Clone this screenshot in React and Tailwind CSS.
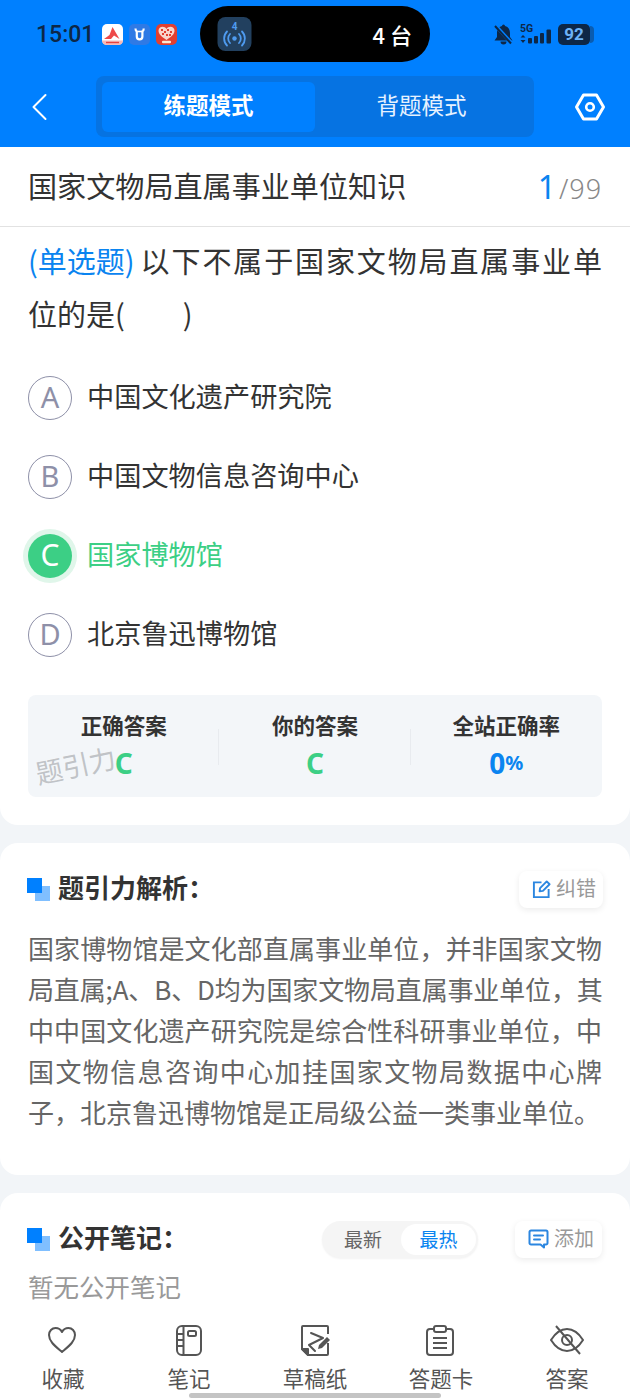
const FONT = 'font-["Noto_Sans_CJK_SC","Noto_Sans",sans-serif]';

const analysisLines = [
  '国家博物馆是文化部直属事业单位，并非国家文物',
  '局直属;A、B、D均为国家文物局直属事业单位，其',
  '中中国文化遗产研究院是综合性科研事业单位，中',
  '国文物信息咨询中心加挂国家文物局数据中心牌',
];

const options = [
  { key: 'A', text: '中国文化遗产研究院' },
  { key: 'B', text: '中国文物信息咨询中心' },
  { key: 'C', text: '国家博物馆', active: true },
  { key: 'D', text: '北京鲁迅博物馆' },
];

const AppIcons = () => (
  <div className="flex items-center gap-[6px]">
    <svg width="21" height="21" viewBox="0 0 21 21">
      <rect width="21" height="21" rx="5" fill="#fff" />
      <path d="M2 15 L7.5 11 L10.5 3 L17.5 15 L12 11.5 L9 15 Z" fill="#ee4a4a" />
      <path d="M0 16.5h21a4.5 4.5 0 0 1-4.5 4.5h-12A4.5 4.5 0 0 1 0 16.5z" fill="#f7b9b7" />
      <rect x="4" y="17.8" width="13" height="1.4" fill="#e8423f" />
    </svg>
    <svg width="21" height="21" viewBox="0 0 21 21">
      <rect width="21" height="21" rx="5" fill="#2f7ae5" />
      <path d="M6.5 4.5 C6.5 6.5 7 7.2 7.8 7.5 V12.5 a2.8 2.8 0 0 0 5.6 0 V7.5 C14.2 7.2 14.7 6.5 14.7 4.5" fill="none" stroke="#fff" strokeWidth="2.2" />
      <path d="M8.5 7.5h4.5" stroke="#fff" strokeWidth="1.6" />
    </svg>
    <svg width="21" height="21" viewBox="0 0 21 21">
      <rect width="21" height="21" rx="5" fill="#e23f30" />
      <path d="M10.5 16 C6 13 2.5 10.5 2.5 6.8 C2.5 4.2 4.5 2.8 6.5 2.8 C8.2 2.8 9.8 3.6 10.5 5 C11.2 3.6 12.8 2.8 14.5 2.8 C16.5 2.8 18.5 4.2 18.5 6.8 C18.5 10.5 15 13 10.5 16 Z" fill="#f9d6cc" />
      <path d="M5 5h2v2H5zM8 7h2v2H8zM11 5h2v2h-2zM14 7h2v2h-2zM6 9h2v2H6zM10 10h2v2h-2zM13 10h2v2h-2z" fill="#e23f30" />
      <rect x="6" y="16.8" width="9" height="2.4" rx="1" fill="#fbe9d2" />
    </svg>
  </div>
);

const StatusBar = () => (
  <div className="h-[68px] shrink-0 pl-[36px] pr-[36px] pt-[6px] flex items-start">
    <div className="w-[164px] h-[56px] flex items-center">
      <span className="w-[66px] text-[23px] text-[#0d2747] font-medium font-['Roboto',sans-serif] leading-none">15:01</span>
      <AppIcons />
    </div>
    <div className="w-[230px] h-[56px] bg-black rounded-[28px] flex items-center justify-between pl-[17px] pr-[18px]">
      <svg width="35" height="34" viewBox="0 0 34 34">
        <rect width="34" height="34" rx="8" fill="#22405f" />
        <text x="17" y="13" fontSize="10" fontWeight="700" fill="#4f9bf0" textAnchor="middle" fontFamily="Roboto, sans-serif">4</text>
        <circle cx="17" cy="21.5" r="2.2" fill="#4f9bf0" />
        <path d="M12.5 17 a6.5 6.5 0 0 0 0 9 M21.5 17 a6.5 6.5 0 0 1 0 9 M9.5 14.5 a10 10 0 0 0 0 14 M24.5 14.5 a10 10 0 0 1 0 14" fill="none" stroke="#4f9bf0" strokeWidth="1.8" strokeLinecap="round" />
      </svg>
      <span className={`text-[22px] text-white font-medium leading-none ${FONT}`}>4 台</span>
    </div>
    <div className="flex-1 h-[56px] flex items-center justify-end">
      <svg width="19" height="21" viewBox="0 0 19 21">
        <path d="M9.5 0.5 a1.5 1.5 0 0 1 1.5 1.5 C14.8 3 16 6 16 9.5 V13 L18.5 16.5 H0.5 L3 13 V9.5 C3 6 4.2 3 8 2 A1.5 1.5 0 0 1 9.5 0.5Z" fill="#0d2747" />
        <path d="M6.5 17.5 a3 3 0 0 0 6 0z" fill="#0d2747" />
        <path d="M1 1 L17.5 19" stroke="#0080ff" strokeWidth="3.6" />
        <path d="M1 2 L17 19.5" stroke="#0d2747" strokeWidth="2" />
      </svg>
      <svg className="ml-[7px]" width="32" height="22" viewBox="0 0 32 22">
        <text x="0" y="8.5" fontSize="10.5" fontWeight="700" fill="#0d2747" fontFamily="Roboto, sans-serif">5G</text>
        <path d="M3 12 L5.5 14.5 H0.5 Z M3 20 L0.5 17 H5.5 Z" fill="#0d2747" />
        <rect x="8" y="15" width="4" height="5.5" rx="1" fill="#0d2747" />
        <rect x="14" y="13" width="4" height="7.5" rx="1" fill="#0d2747" />
        <rect x="20" y="10" width="4" height="10.5" rx="1" fill="#0d2747" />
        <rect x="26.5" y="6.5" width="4.5" height="14" rx="1" fill="#0d2747" />
      </svg>
      <div className="flex items-center ml-[6px]">
        <div className="w-[32px] h-[21px] rounded-[5px] bg-[#0d2747] flex items-center justify-center">
          <span className="text-[17px] font-bold text-[#6db3f8] font-['Roboto',sans-serif] leading-none">92</span>
        </div>
        <div className="w-[4px] h-[17px] rounded-r-[4px] bg-[#0a5cb0]" />
      </div>
    </div>
  </div>
);

const Header = () => (
  <div className="bg-[#0080ff] h-[147px] shrink-0 flex flex-col">
    <StatusBar />
    <div className="flex items-start h-[79px] pt-[8px]">
      <div className="w-[96px] h-[61px] flex items-center pl-[30px]">
        <svg width="18" height="28" viewBox="0 0 18 28" fill="none">
          <path d="M15.5 2 L3.5 14 L15.5 26" stroke="#fff" strokeWidth="2" strokeLinecap="round" strokeLinejoin="round" />
        </svg>
      </div>
      <div className="w-[438px] h-[61px] rounded-[8px] bg-[#0673e2] p-[6px] flex">
        <div className={`w-[213px] h-[50px] pb-[5px] rounded-[6px] bg-[#0080ff] flex items-center justify-center text-[22.5px] font-bold text-white ${FONT}`}>
          练题模式
        </div>
        <div className={`flex-1 h-[50px] pb-[5px] flex items-center justify-center text-[22.5px] text-[#e6f2ff] ${FONT}`}>
          背题模式
        </div>
      </div>
      <div className="flex-1 h-[61px] flex items-center justify-center pl-[16px]">
        <svg width="32" height="28" viewBox="0 0 32 28" fill="none">
          <path d="M9.5 2 H22.5 L29.5 14 L22.5 26 H9.5 L2.5 14 Z" stroke="#fff" strokeWidth="3" strokeLinejoin="round" />
          <circle cx="16" cy="14" r="3.8" stroke="#fff" strokeWidth="2.6" />
        </svg>
      </div>
    </div>
  </div>
);

const OptionRow = ({ item }) => (
  <div className="h-[79px] flex items-center">
    {item.active ? (
      <div className="w-[44px] h-[44px] pb-[2px] rounded-full bg-[#3ccf85] ring-[5px] ring-[#e0f6ea] flex items-center justify-center text-[30px] text-white font-['Noto_Sans',sans-serif] leading-none">
        {item.key}
      </div>
    ) : (
      <div className="w-[44px] h-[44px] pb-[2px] rounded-full border border-[#8e90a8] flex items-center justify-center text-[29px] text-[#8e90a8] font-['Noto_Sans',sans-serif] leading-none">
        {item.key}
      </div>
    )}
    <span className={`ml-[15px] pb-[3px] text-[27.2px] leading-none ${item.active ? 'text-[#3ccf85]' : 'text-[#333333]'}`}>{item.text}</span>
  </div>
);

const StatCell = ({ label, children, divider }) => (
  <div className="flex-1 relative flex flex-col items-center pt-[17px]">
    <span className="text-[21.5px] font-bold text-[#333333] leading-[26px]">{label}</span>
    <div className="h-[28px] mt-[11px] flex items-center font-['Noto_Sans',sans-serif] font-bold leading-none">{children}</div>
    {divider && <div className="absolute right-0 top-[34px] h-[36px] w-px bg-[#e8ebef]" />}
  </div>
);

const QuestionCard = () => (
  <div className="bg-white rounded-b-[18px] h-[678px] shrink-0">
    <div className="h-[80px] px-[28px] border-b border-[#e2e2e2] flex items-center justify-between">
      <span className="pb-[2px] text-[29.1px] text-[#333333] leading-none">国家文物局直属事业单位知识</span>
      <span className="flex items-baseline font-['Noto_Sans',sans-serif] leading-none">
        <span className="text-[32px] text-[#0a84f0]">1</span>
        <span className="text-[27px] font-light text-[#888888] ml-[3px] tracking-[0.9px]">/99</span>
      </span>
    </div>
    <div className="px-[28px] pt-[7px] text-[29px] leading-[53px] text-[#333333]">
      <div className="flex">
        <span className="text-[#0a84f0] whitespace-nowrap">(单选题)</span>
        <span className="flex-1 ml-[6px] [text-align-last:justify]">以下不属于国家文物局直属事业单</span>
      </div>
      <div>
        位的是(<span className="inline-block w-[58px]" />)
      </div>
    </div>
    <div className="px-[28px] pt-[18px]">
      {options.map((item) => (
        <OptionRow key={item.key} item={item} />
      ))}
    </div>
    <div className="relative mx-[28px] mt-[21px] h-[102px] rounded-[8px] bg-[#f3f6f9] flex">
      <StatCell label="正确答案" divider>
        <span className="text-[28px] text-[#3ccf85]">C</span>
      </StatCell>
      <StatCell label="你的答案" divider>
        <span className="text-[28px] text-[#3ccf85]">C</span>
      </StatCell>
      <StatCell label="全站正确率">
        <span className="text-[28px] text-[#0a84f0]">0</span>
        <span className="text-[20px] text-[#0a84f0]">%</span>
      </StatCell>
      <span className="absolute left-[7px] top-[56px] text-[27px] leading-none text-[#b9bcc0]/90 -rotate-[12deg] pointer-events-none">题引力</span>
    </div>
  </div>
);

const SectionTitle = ({ children }) => (
  <div className="flex items-center -ml-[1px]">
    <div className="relative w-[23px] h-[23px] shrink-0">
      <div className="absolute right-0 bottom-0 w-[15px] h-[15px] bg-[#80bfff]" />
      <div className="absolute left-0 top-0 w-[15px] h-[15px] bg-[#0080ff]" />
    </div>
    <span className="ml-[8px] pb-[4px] text-[26px] font-bold text-[#333333] leading-none">{children}</span>
  </div>
);

const SmallAction = ({ icon, label, w }) => (
  <div className={`${w} h-[37px] pl-[13px] rounded-[8px] bg-white shadow-[0_2px_6px_rgba(0,0,0,0.08)] flex items-center gap-[5px]`}>
    {icon}
    <span className="pb-[2px] text-[20px] text-[#999999] leading-none">{label}</span>
  </div>
);

const AnalysisCard = () => (
  <div className="bg-white rounded-[18px] h-[332px] mt-[18px] shrink-0 px-[28px]">
    <div className="flex items-center justify-between pt-[28px] h-[64px]">
      <SectionTitle>题引力解析：</SectionTitle>
      <div className="-mr-[1px]">
        <SmallAction
          w="w-[84px]"
          label="纠错"
          icon={
            <svg width="19" height="19" viewBox="0 0 20 20" fill="none" stroke="#2b86e0" strokeWidth="2">
              <path d="M10 2.5 H2 V18 H17.5 V9.5" />
              <path d="M8 12 L8.5 8.5 L15.5 1.5 L18.5 4.5 L11.5 11.5 Z" strokeLinejoin="round" />
            </svg>
          }
        />
      </div>
    </div>
    <div className="pt-[20px] text-[26px] leading-[41px] text-[#666666]">
      {analysisLines.map((line) => (
        <div key={line} className="[text-align-last:justify] whitespace-nowrap">
          {line.includes(';') ? <span className="tracking-[-0.14px]">{line}</span> : line}
        </div>
      ))}
      <div className="whitespace-nowrap">子，北京鲁迅博物馆是正局级公益一类事业单位。</div>
    </div>
  </div>
);

const NotesCard = () => (
  <div className="bg-white rounded-t-[18px] mt-[18px] flex-1 px-[28px]">
    <div className="flex items-center pt-[28px] h-[64px]">
      <SectionTitle>公开笔记：</SectionTitle>
      <div className="ml-auto mr-[37px] w-[156px] h-[37px] rounded-full bg-[#f5f5f5] shadow-[0_1px_2px_rgba(0,0,0,0.05)] flex items-center pl-[3px] pr-[2px]">
        <span className="w-[76px] pb-[2px] text-center text-[19px] text-[#666666] leading-none">最新</span>
        <span className="flex-1 h-[31px] pb-[2px] rounded-full bg-white flex items-center justify-center text-[19px] text-[#0a84f0] leading-none">最热</span>
      </div>
      <SmallAction
        w="w-[87px]"
        label="添加"
        icon={
          <svg width="21" height="20" viewBox="0 0 21 20" fill="none" stroke="#2b86e0" strokeWidth="2">
            <path d="M3 1.5 H18 A1.5 1.5 0 0 1 19.5 3 V14 A1.5 1.5 0 0 1 18 15.5 H16 V18.5 L12.5 15.5 H3 A1.5 1.5 0 0 1 1.5 14 V3 A1.5 1.5 0 0 1 3 1.5Z" strokeLinejoin="round" />
            <path d="M6 6.5 H15 M6 10.5 H12" strokeLinecap="round" />
          </svg>
        }
      />
    </div>
    <div className="pt-[16px] text-[25.5px] leading-none text-[#999999]">暂无公开笔记</div>
  </div>
);

const tabs = [
  {
    label: '收藏',
    icon: <path d="M16 28 C9 22 3 17.5 3 11 C3 7 6 4 9.5 4 C12.5 4 15 6 16 8 C17 6 19.5 4 22.5 4 C26 4 29 7 29 11 C29 17.5 23 22 16 28 Z" strokeLinejoin="round" />,
  },
  {
    label: '笔记',
    icon: (
      <>
        <rect x="5" y="2" width="24" height="29" rx="5" />
        <path d="M11.5 2 V31 M5 10 H11.5 M5 16 H11.5 M5 22 H11.5" />
        <rect x="16" y="7" width="8" height="5" rx="1.5" />
      </>
    ),
  },
  {
    label: '草稿纸',
    icon: (
      <>
        <path d="M30 10 V3 A1 1 0 0 0 29 2 H5 A1 1 0 0 0 4 3 V25 L10 31 H29 A1 1 0 0 0 30 30 V19" strokeLinejoin="round" />
        <path d="M4 25 H10 V31 Z" fill="#555555" strokeLinejoin="round" />
        <path d="M13 9 L25 14 L11 21 L17 27" strokeLinejoin="round" strokeLinecap="round" />
        <path d="M20 25 L21 21 L29 13 L32 16 L24 24 Z" fill="#555555" stroke="none" />
      </>
    ),
  },
  {
    label: '答题卡',
    icon: (
      <>
        <path d="M10 5 H6 A3 3 0 0 0 3 8 V28 A3 3 0 0 0 6 31 H26 A3 3 0 0 0 29 28 V8 A3 3 0 0 0 26 5 H22" />
        <rect x="10" y="2" width="12" height="6" rx="2" />
        <path d="M9 14 H23 M9 19 H23 M9 24 H23" />
      </>
    ),
  },
  {
    label: '答案',
    icon: (
      <>
        <path d="M1 16 C6 8 11 5 17 5 C23 5 28 8 33 16 C28 24 23 27 17 27 C11 27 6 24 1 16 Z" strokeLinejoin="round" />
        <circle cx="17" cy="16" r="5" />
        <path d="M6 2 L30 30" />
      </>
    ),
  },
];

const BottomBar = () => (
  <div className="relative h-[86px] shrink-0 bg-white flex justify-between px-[21px] pt-[10px]">
    {tabs.map((tab) => (
      <div key={tab.label} className="w-[84px] flex flex-col items-center">
        <svg width="34" height="33" viewBox="0 0 34 33" fill="none" stroke="#555555" strokeWidth="2">
          {tab.icon}
        </svg>
        <span className="mt-[10px] text-[21.5px] leading-none text-[#555555]">{tab.label}</span>
      </div>
    ))}
    <div className="absolute left-[189px] bottom-[2px] w-[252px] h-[5px] rounded-full bg-[#c4c4c4]" />
  </div>
);

export default function App() {
  return (
    <div className={`w-[630px] h-[1400px] bg-[#f2f5f8] flex flex-col overflow-hidden ${FONT}`}>
      <Header />
      <QuestionCard />
      <AnalysisCard />
      <NotesCard />
      <BottomBar />
    </div>
  );
}
